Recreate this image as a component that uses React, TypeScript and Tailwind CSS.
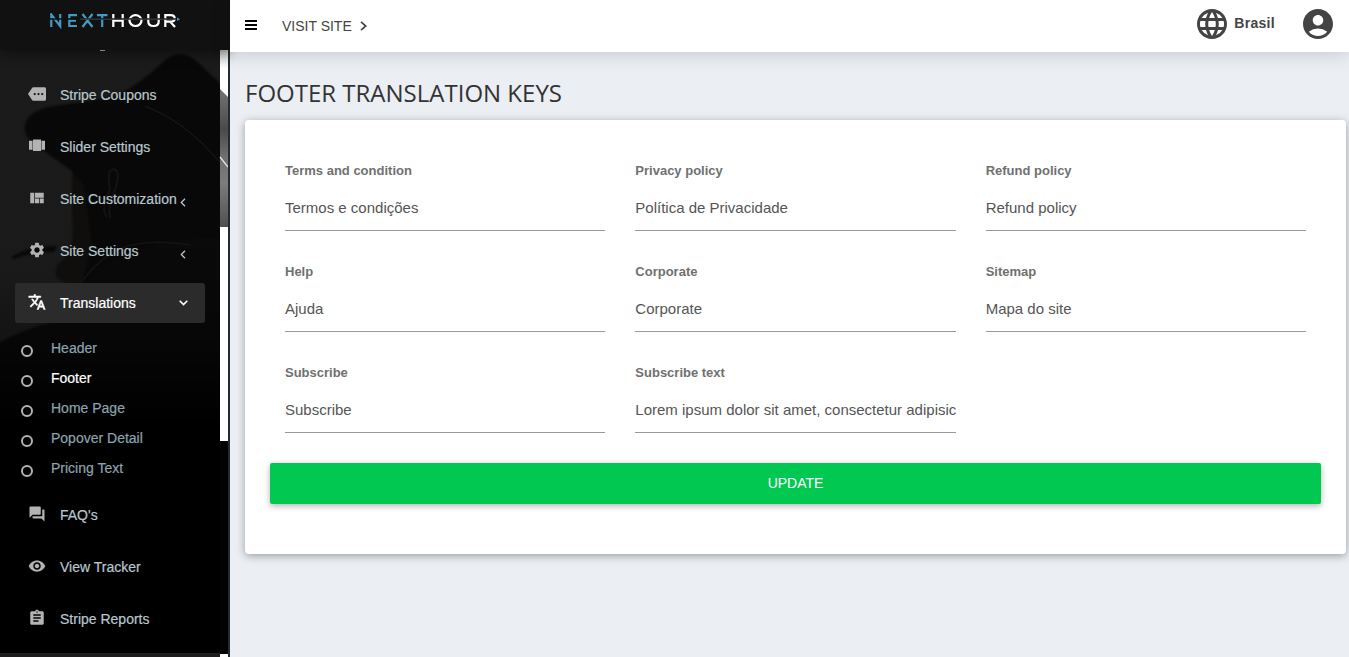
import React from "react";
import {
  MdMore, MdViewQuilt, MdSettings, MdQuestionAnswer,
  MdVisibility, MdAssignment, MdLanguage, MdAccountCircle,
} from "react-icons/md";

type Item = { label: string; icon: React.ComponentType<{ className?: string }>; arrow?: boolean };

function CarouselIcon({ className }: { className?: string }) {
  return (
    <svg className={className} viewBox="0 0 18 18" fill="currentColor">
      <path d="M5 2.5h8v11.5H5z" />
      <path d="M1 3.8h3.2v8.9H1zM13.8 3.8H17v8.9h-3.2z" />
      <path d="M4.2 3.8H5v8.9h-.8zM13 3.8h.8v8.9H13z" opacity=".55" />
    </svg>
  );
}

const topItems: Item[] = [
  { label: "Stripe Coupons", icon: MdMore },
  { label: "Slider Settings", icon: CarouselIcon },
  { label: "Site Customization", icon: MdViewQuilt, arrow: true },
  { label: "Site Settings", icon: MdSettings, arrow: true },
];
const subItems = ["Header", "Footer", "Home Page", "Popover Detail", "Pricing Text"];
const bottomItems: Item[] = [
  { label: "FAQ's", icon: MdQuestionAnswer },
  { label: "View Tracker", icon: MdVisibility },
  { label: "Stripe Reports", icon: MdAssignment },
];
const fields = [
  ["Terms and condition", "Termos e condições"],
  ["Privacy policy", "Política de Privacidade"],
  ["Refund policy", "Refund policy"],
  ["Help", "Ajuda"],
  ["Corporate", "Corporate"],
  ["Sitemap", "Mapa do site"],
  ["Subscribe", "Subscribe"],
  ["Subscribe text", "Lorem ipsum dolor sit amet, consectetur adipisic"],
];

function NavItem({ label, icon: Icon, arrow }: Item) {
  return (
    <div className="mr-[23px] mb-3 ml-[15px] flex h-10 items-center pl-[13px] text-[#b8c7ce]">
      <Icon className="mb-[3px] size-[18px] shrink-0 text-[#b3b3b3]" />
      <span className="mt-px ml-[14px] whitespace-nowrap text-[14px] [-webkit-text-stroke:0.2px_currentColor]">{label}</span>
      {arrow && (
        <svg className="mt-[7px] mr-[19px] ml-auto h-[9px] w-[6px] shrink-0" viewBox="0 0 6 9" fill="none" stroke="currentColor" strokeWidth="1.3">
          <path d="M5 .7L1.3 4.5L5 8.3" />
        </svg>
      )}
    </div>
  );
}

function Backdrop() {
  return (
    <svg className="absolute inset-0 h-full w-[228px]" viewBox="0 0 228 657" preserveAspectRatio="none">
      <defs>
        <linearGradient id="wall" x1="0" y1="0" x2="0" y2="1">
          <stop offset="0" stopColor="#1b1b1b" />
          <stop offset=".4" stopColor="#1a1a1a" />
          <stop offset=".55" stopColor="#121212" />
          <stop offset=".68" stopColor="#000" />
        </linearGradient>
        <linearGradient id="coat" gradientUnits="userSpaceOnUse" x1="0" y1="240" x2="0" y2="430">
          <stop offset="0" stopColor="#0a0a0a" />
          <stop offset=".5" stopColor="#070707" />
          <stop offset="1" stopColor="#000" />
        </linearGradient>
        <linearGradient id="sky" x1="0" y1="0" x2="0" y2="1">
          <stop offset="0" stopColor="#d5d5d5" />
          <stop offset=".4" stopColor="#fff" />
        </linearGradient>
        <linearGradient id="felt" x1="0" y1="0" x2="0" y2="1">
          <stop offset="0" stopColor="#8c8c8c" />
          <stop offset=".25" stopColor="#6e6e6e" />
          <stop offset=".45" stopColor="#4a4a4a" />
          <stop offset=".6" stopColor="#6f6f6f" />
          <stop offset=".75" stopColor="#7c7c7c" />
          <stop offset="1" stopColor="#505050" />
        </linearGradient>
        <filter id="soft" colorInterpolationFilters="sRGB"><feGaussianBlur stdDeviation="1.2" /></filter>
      </defs>
      <rect width="228" height="657" fill="url(#wall)" />
      <g filter="url(#soft)">
        <path d="M25 125 Q27 113 48 107 L115 97 Q143 82 163 62 Q178 48 194 59 L240 102 V330 L76 300 L92 245 L84 190 L72 171 L36 145 Q23 137 25 125Z" fill="#080808" />
        <path d="M72 172 L84 185 L92 245 L78 290 L60 280 Q53 276 57 265 Q77 250 72 220Z" fill="#100e0d" />
        <path d="M-5 345 Q30 325 72 318 Q93 269 120 257 Q175 232 240 241 V660 H-5Z" fill="url(#coat)" />
        <path d="M11 257 Q30 246 57 246 L54 252 Q30 252 14 259Z" fill="#080808" />
      </g>
      <path d="M145 106 Q184 120 220 162" fill="none" stroke="#1c1c1c" />
      <path d="M107 217 Q100 207 110 190 Q106 169 114 169 Q121 171 115 190 Q107 205 110 218" fill="none" stroke="#131313" strokeWidth="2" />
      <path d="M80 284 Q105 249 137 244 Q160 240 190 245" fill="none" stroke="#141414" strokeWidth="1.5" />
      <rect y="653" width="220" height="4" fill="#1e1c1d" />
      <rect x="220" y="50" width="8" height="177" fill="url(#felt)" />
      <path d="M220 50H228V97L220 89Z" fill="url(#sky)" />
      <path d="M220 157L228 167" stroke="#e5e5e5" strokeWidth="1.3" />
      <rect x="220" y="227" width="8" height="214" fill="#fff" />
      <rect x="220" y="441" width="8" height="213" fill="#030303" />
      <rect x="220" y="654" width="8" height="3" fill="#fff" />
    </svg>
  );
}

function Logo() {
  return (
    <svg className="mt-[13px] h-[16px] w-[130px]" viewBox="0 0 130 16">
      <g fill="none" strokeWidth="2.2">
        <path stroke="#3f9cc5" d="M1.3 14V1.5L10.2 13.2V1M27 2.2H19.3V13H27M19.3 7.6H26M32.5 1L42.5 14M42.5 1L32.5 14M47 2.2H57.5M52.2 2V14" />
        <g stroke="#fff">
          <path d="M63.3 1V14M72.7 1V14M63.3 7.6H72.7M98.3 1V8.5Q98.3 13 103.5 13Q108.7 13 108.7 8.5V1M115.3 14V2.2H120.5Q124.7 2.2 124.7 5.4Q124.7 8.6 120.5 8.6H115.3M120 8.6L125 14" />
          <ellipse cx="85.5" cy="7.6" rx="6" ry="5.4" />
        </g>
      </g>
      <path d="M0 6H126" stroke="#111" strokeWidth="1.3" />
      <path d="M30 6.2H126" stroke="#666" strokeWidth=".6" />
      <path d="M127 4.5L130 6.2L127 8Z" fill="#3f9cc5" />
    </svg>
  );
}

function Sidebar() {
  return (
    <aside className="relative h-[657px] w-[230px] shrink-0 border-r-2 border-[#222d32] bg-black">
      <Backdrop />
      <nav className="relative pt-[75px]">
        {topItems.map((i) => <NavItem key={i.label} {...i} />)}
        <div className="mr-[23px] ml-[15px] flex h-10 items-center rounded-[3px] bg-[#2b2b2b] pl-[13px] text-white">
          <svg className="mb-[3px] size-[18px]" viewBox="0 0 24 24" fill="currentColor" stroke="currentColor" strokeWidth=".7">
            <path d="m12.87 15.07-2.54-2.51.03-.03A17.52 17.52 0 0 0 14.07 6H17V4h-7V2H8v2H1v1.99h11.17C11.5 7.92 10.44 9.75 9 11.35 8.07 10.32 7.3 9.19 6.69 8h-2c.73 1.63 1.73 3.17 2.98 4.56l-5.09 5.02L4 19l5-5 3.11 3.11.76-2.04zM18.5 10h-2L12 22h2l1.12-3h4.75L21 22h2l-4.5-12zm-2.62 7 1.62-4.33L19.12 17h-3.24z" />
          </svg>
          <span className="mt-px ml-[14px] text-[14px] [-webkit-text-stroke:0.2px_currentColor]">Translations</span>
          <svg className="mr-[17px] ml-auto h-[6px] w-[9px]" viewBox="0 0 9 6" fill="none" stroke="currentColor" strokeWidth="1.6">
            <path d="M.7 .8L4.5 4.6L8.3 .8" />
          </svg>
        </div>
        <ul className="mb-[12px] pt-[10px]">
          {subItems.map((s) => (
            <li key={s} className={"flex h-[30px] items-center pl-[21px] text-[14px] " + (s === "Footer" ? "text-white" : "text-[#8aa4af]")}>
              <span className="mt-[5px] size-[12px] rounded-full border-2 border-[#b3b3b3]" />
              <span className="ml-[18px] [-webkit-text-stroke:0.2px_currentColor]">{s}</span>
            </li>
          ))}
        </ul>
        {bottomItems.map((i) => <NavItem key={i.label} {...i} />)}
      </nav>
      <div className="absolute top-0 left-0 flex h-[50px] w-[230px] justify-center bg-[#111] shadow-[0_4px_12px_rgba(0,0,0,.45)]">
        <Logo />
      </div>
      <span className="absolute top-[50px] left-[100px] h-px w-[5px] bg-[#7b898f]" />
    </aside>
  );
}

export default function App() {
  return (
    <div className="flex h-[657px] w-[1349px] overflow-hidden bg-[#ebeef3] font-['Liberation_Sans',Arial,sans-serif]">
      <Sidebar />
      <div className="flex min-w-0 flex-1 flex-col">
        <header className="relative flex h-[52px] shrink-0 items-center bg-white text-[#444] shadow-[0_1px_20px_rgba(0,0,0,.18)]">
          <svg className="mb-[2px] ml-[15px] h-[10px] w-[12px]" viewBox="0 0 12 10" fill="#000">
            <path d="M0 0h12v2H0zM0 4h12v2H0zM0 8h12v2H0z" />
          </svg>
          <span className="ml-[25px] text-[14px]">VISIT SITE</span>
          <svg className="ml-[8px] h-[10px] w-[7px]" viewBox="0 0 7 10" fill="none" stroke="currentColor" strokeWidth="1.7">
            <path d="M1 .8L5.8 5L1 9.2" />
          </svg>
          <MdLanguage className="mb-[4px] ml-auto size-9" />
          <span className="mb-[5px] ml-[4px] text-[14px] font-bold tracking-[.3px]">Brasil</span>
          <MdAccountCircle className="mr-[13px] mb-[4px] ml-[25px] size-9" />
        </header>
        <main className="pr-[3px] pl-[15px]">
          <h1 className="mt-[24px] mb-px h-[43px] font-['Open_Sans',sans-serif] text-[24px] leading-[33px] font-normal text-[#333]">FOOTER TRANSLATION KEYS</h1>
          <section className="h-[434px] rounded-[4px] bg-white px-[25px] pt-[42px] shadow-[0_2px_8px_rgba(0,0,0,.35)]">
            <div className="grid grid-cols-3 gap-x-[30px] px-[15px]">
              {fields.map(([label, value]) => (
                <div key={label} className="h-[101px] min-w-0">
                  <label className="block text-[13px] leading-[18px] font-bold text-[#707070]">{label}</label>
                  <div className="mt-[11px] h-[40px] border-b border-[#999] text-[15px] leading-[34px] whitespace-nowrap text-[#555]">{value}</div>
                </div>
              ))}
            </div>
            <button className="mt-[-2px] h-[41px] w-full rounded-[2px] bg-[#00c851] text-[14px] text-white shadow-[0_2px_6px_rgba(0,0,0,.3)]">UPDATE</button>
          </section>
        </main>
      </div>
    </div>
  );
}
